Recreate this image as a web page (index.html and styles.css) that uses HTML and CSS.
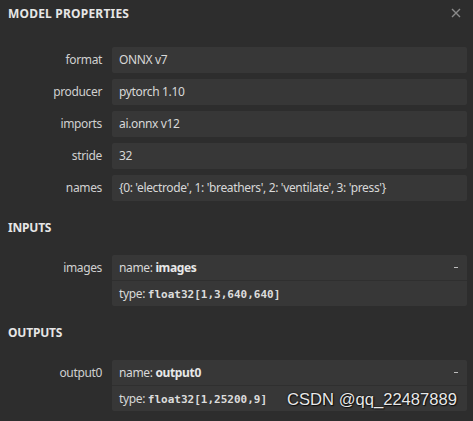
FILE: index.html
```html
<!DOCTYPE html>
<html>
<head>
<meta charset="utf-8">
<link rel="stylesheet" href="styles.css">
</head>
<body>
<div class="sidebar">
  <div class="header">
    <span class="title">MODEL PROPERTIES</span>
    <span class="close">
      <svg width="10" height="10" viewBox="0 0 10 10"><path d="M1 1L9 9M9 1L1 9" stroke="#8a8a8a" stroke-width="1.4" fill="none"/></svg>
    </span>
  </div>
  <div class="content">
    <div class="group first">
      <div class="row"><div class="label">format</div><div class="value"><div class="line">ONNX v7</div></div></div>
      <div class="row"><div class="label">producer</div><div class="value"><div class="line">pytorch 1.10</div></div></div>
      <div class="row"><div class="label">imports</div><div class="value"><div class="line">ai.onnx v12</div></div></div>
      <div class="row"><div class="label">stride</div><div class="value"><div class="line">32</div></div></div>
      <div class="row"><div class="label">names</div><div class="value"><div class="line">{0: 'electrode', 1: 'breathers', 2: 'ventilate', 3: 'press'}</div></div></div>
    </div>
    <div class="heading">INPUTS</div>
    <div class="group">
      <div class="row"><div class="label">images</div><div class="value">
        <div class="line split">name: <b>images</b><span class="toggle"></span></div>
        <div class="line">type: <code>float32[1,3,640,640]</code></div>
      </div></div>
    </div>
    <div class="heading">OUTPUTS</div>
    <div class="group">
      <div class="row"><div class="label">output0</div><div class="value">
        <div class="line split">name: <b>output0</b><span class="toggle"></span></div>
        <div class="line">type: <code>float32[1,25200,9]</code></div>
      </div></div>
    </div>
  </div>
  <div class="watermark">CSDN @qq_22487889</div>
</div>
</body>
</html>
```
FILE: styles.css
```css
html, body {
  margin: 0;
  padding: 0;
  background: #2d2d2d;
}
body {
  font-family: "Noto Sans", sans-serif;
  font-size: 12px;
  color: #d8d8d8;
}
.sidebar {
  position: relative;
  width: 473px;
  height: 421px;
  overflow: hidden;
}
.header {
  display: flex;
  align-items: center;
  justify-content: space-between;
  height: 26px;
  padding: 0 12px 0 8px;
}
.title {
  font-weight: bold;
  font-size: 12px;
  color: #e6e6e6;
  letter-spacing: 0.2px;
}
.close {
  display: flex;
}
.content {
  padding: 21px 6px 0 6px;
}
.group {
  display: flex;
  flex-direction: column;
  gap: 6px;
}
.row {
  display: flex;
  align-items: flex-start;
}
.label {
  width: 96px;
  flex: none;
  text-align: right;
  height: 26px;
  line-height: 26px;
  color: #d0d0d0;
  padding-right: 10px;
  box-sizing: content-box;
  letter-spacing: -0.35px;
}
.value {
  flex: 1;
  background: #373737;
  border-radius: 2px;
  display: flex;
  flex-direction: column;
}
.line {
  height: 25px;
  line-height: 25px;
  padding: 0 7px;
  white-space: nowrap;
  position: relative;
  letter-spacing: -0.35px;
}
.row > .value > .line:only-child {
  height: 26px;
  line-height: 26px;
}
.line.split {
  border-bottom: 1px solid #2f2f2f;
}
.line b {
  font-weight: bold;
  color: #e8e8e8;
}
.line code {
  font-family: "DejaVu Sans Mono", monospace;
  font-size: 11px;
  font-weight: bold;
  color: #dcdcdc;
  letter-spacing: 0;
}
.toggle {
  position: absolute;
  right: 9px;
  top: 12px;
  width: 4px;
  height: 1px;
  background: #bdbdbd;
}
.heading {
  font-weight: bold;
  font-size: 12px;
  color: #e6e6e6;
  height: 18px;
  line-height: 18px;
  margin: 18px 0 18px 2px;
  letter-spacing: -0.2px;
}
.watermark {
  position: absolute;
  left: 287px;
  top: 390px;
  font-family: "Liberation Sans", Arial, sans-serif;
  font-size: 16.6px;
  color: #e8e8e8;
  text-shadow: 0 0 2px #000, 1px 1px 1px #111;
}
```
